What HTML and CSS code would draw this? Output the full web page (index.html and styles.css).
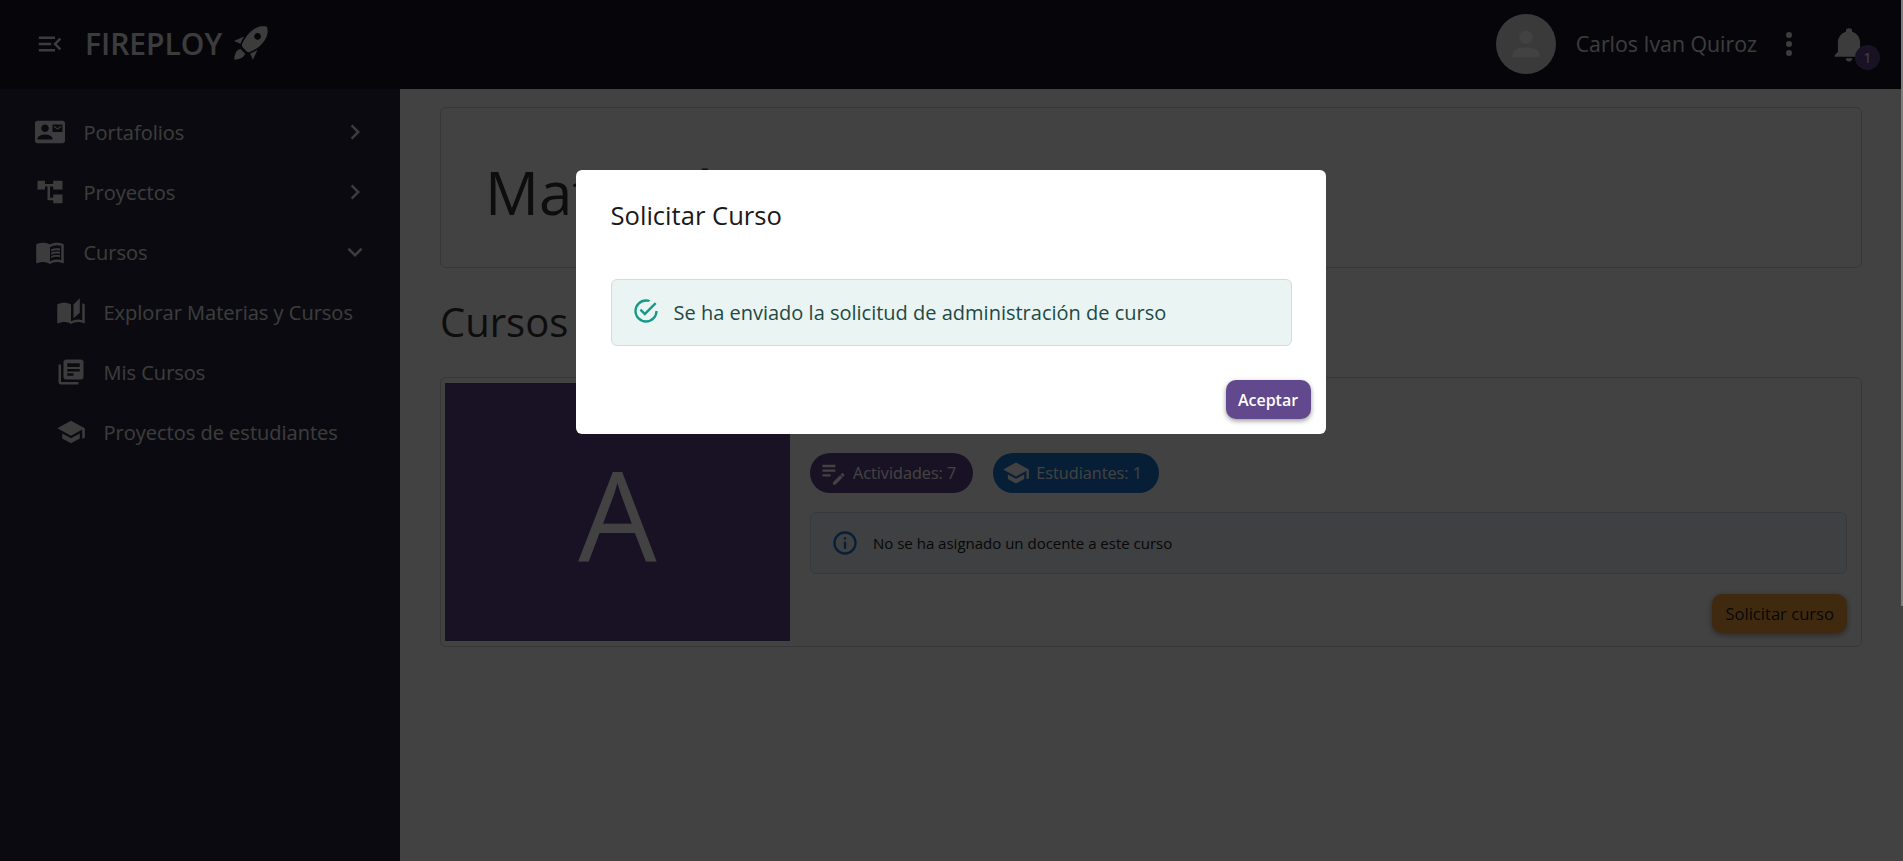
FILE: index.html
```html
<!DOCTYPE html>
<html lang="es">
<head>
  <meta charset="UTF-8" />
  <title>Fireploy</title>
  <link rel="stylesheet" href="styles.css">
</head>
<body>

  <header class="topbar">
    <div class="brand">
      <svg class="menu-toggle" viewBox="0 0 24 24"><path d="M21,15.61L19.59,17L14.58,12L19.59,7L21,8.39L17.44,12L21,15.61M3,6H16V8H3V6M3,13V11H13V13H3M3,18V16H16V18H3Z"/></svg>
      <span class="brand-name">FIREPLOY</span>
      <svg class="brand-rocket" viewBox="0 0 24 24"><path d="M13.13 22.19L11.5 18.36C13.07 17.78 14.54 17 15.9 16.09L13.13 22.19M5.64 12.5L1.81 10.87L7.91 8.1C7 9.46 6.22 10.93 5.64 12.5M21.61 2.39C21.61 2.39 16.66 .269 11 5.93C8.81 8.12 7.5 10.53 6.65 12.64C6.37 13.39 6.56 14.21 7.11 14.77L9.24 16.89C9.79 17.45 10.61 17.63 11.36 17.35C13.5 16.53 15.88 15.19 18.07 13C23.73 7.34 21.61 2.39 21.61 2.39M14.54 9.46C13.76 8.68 13.76 7.41 14.54 6.63S16.59 5.85 17.37 6.63C18.14 7.41 18.15 8.68 17.37 9.46C16.59 10.24 15.32 10.24 14.54 9.46M2 22C2 19 3 16.5 5.5 15.5L8.5 18.5C7.5 21 5 22 2 22Z" fill-rule="evenodd"/></svg>
    </div>
    <div class="user-area">
      <div class="avatar">
        <svg viewBox="0 0 24 24"><path d="M12,4A4,4 0 0,1 16,8A4,4 0 0,1 12,12A4,4 0 0,1 8,8A4,4 0 0,1 12,4M12,14C16.42,14 20,15.79 20,18V20H4V18C4,15.79 7.58,14 12,14Z"/></svg>
      </div>
      <span class="user-name">Carlos Ivan Quiroz</span>
      <svg class="user-dots" viewBox="0 0 24 24"><path d="M12,16A2,2 0 0,1 14,18A2,2 0 0,1 12,20A2,2 0 0,1 10,18A2,2 0 0,1 12,16M12,10A2,2 0 0,1 14,12A2,2 0 0,1 12,14A2,2 0 0,1 10,12A2,2 0 0,1 12,10M12,4A2,2 0 0,1 14,6A2,2 0 0,1 12,8A2,2 0 0,1 10,6A2,2 0 0,1 12,4Z"/></svg>
      <div class="bell">
        <svg viewBox="0 0 24 24"><path d="M21,19V20H3V19L5,17V11C5,7.9 7.03,5.17 10,4.29C10,4.19 10,4.1 10,4A2,2 0 0,1 12,2A2,2 0 0,1 14,4C14,4.1 14,4.19 14,4.29C16.97,5.17 19,7.9 19,11V17L21,19M14,21A2,2 0 0,1 12,23A2,2 0 0,1 10,21"/></svg>
        <span class="bell-badge">1</span>
      </div>
    </div>
  </header>

  <div class="layout">
    <nav class="sidebar">
      <div class="nav-item">
        <svg class="nav-icon" viewBox="0 0 24 24"><path d="M21 8V7L18 9L15 7V8L18 10M22 3H2C.9 3 0 3.9 0 5V19C0 20.1 .9 21 2 21H22C23.1 21 24 20.1 24 19V5C24 3.9 23.1 3 22 3M8 6C9.66 6 11 7.34 11 9S9.66 12 8 12 5 10.66 5 9 6.34 6 8 6M14 18H2V17C2 15 6 13.9 8 13.9S14 15 14 17M22 12H14V6H22Z"/></svg>
        <span class="nav-label">Portafolios</span>
        <svg class="nav-arrow" viewBox="0 0 24 24"><path d="M8.59,16.58L13.17,12L8.59,7.41L10,6L16,12L10,18L8.59,16.58Z"/></svg>
      </div>
      <div class="nav-item">
        <svg class="nav-icon" viewBox="0 0 24 24"><path d="M2 3H8V10H2V3M14.6 3H22V10H14.6V3M14.6 14H22V21H14.6V14M8 5.5H14.6V7.5H12V16.5H14.6V18.5H10V7.5H8V5.5Z"/></svg>
        <span class="nav-label">Proyectos</span>
        <svg class="nav-arrow" viewBox="0 0 24 24"><path d="M8.59,16.58L13.17,12L8.59,7.41L10,6L16,12L10,18L8.59,16.58Z"/></svg>
      </div>
      <div class="nav-item">
        <svg class="nav-icon" viewBox="0 0 24 24"><path d="M12,21.5C10.65,20.65 8.2,20 6.5,20C4.85,20 3.15,20.3 1.75,21.05C1.65,21.1 1.6,21.1 1.5,21.1C1.25,21.1 1,20.85 1,20.6V6C1.6,5.55 2.25,5.25 3,5C4.11,4.65 5.33,4.5 6.5,4.5C8.45,4.5 10.55,4.9 12,6C13.45,4.9 15.55,4.5 17.5,4.5C18.67,4.5 19.89,4.65 21,5C21.75,5.25 22.4,5.55 23,6V20.6C23,20.85 22.75,21.1 22.5,21.1C22.4,21.1 22.35,21.1 22.25,21.05C20.85,20.3 19.15,20 17.5,20C15.8,20 13.35,20.65 12,21.5M12,8V19.5C13.35,18.65 15.8,18 17.5,18C18.7,18 19.9,18.15 21,18.5V7C19.9,6.65 18.7,6.5 17.5,6.5C15.8,6.5 13.35,7.15 12,8M13,11.5C14.11,10.82 15.6,10.5 17.5,10.5C18.41,10.5 19.26,10.59 20,10.78V9.23C19.13,9.08 18.29,9 17.5,9C15.73,9 14.23,9.28 13,9.84V11.5M17.5,11.67C15.79,11.67 14.29,11.93 13,12.46V14.15C14.11,13.5 15.6,13.16 17.5,13.16C18.54,13.16 19.38,13.24 20,13.4V11.9C19.13,11.74 18.29,11.67 17.5,11.67M20,14.57C19.13,14.41 18.29,14.33 17.5,14.33C15.67,14.33 14.17,14.6 13,15.13V16.82C14.11,16.16 15.6,15.83 17.5,15.83C18.54,15.83 19.38,15.91 20,16.07V14.57Z"/></svg>
        <span class="nav-label">Cursos</span>
        <svg class="nav-arrow" viewBox="0 0 24 24"><path d="M7.41,8.58L12,13.17L16.59,8.58L18,10L12,16L6,10L7.41,8.58Z"/></svg>
      </div>
      <div class="nav-item sub">
        <svg class="nav-icon" viewBox="0 0 24 24"><path d="M19 1L14 6V17L19 12.5V1M21 5V18.5C19.9 18.15 18.7 18 17.5 18C15.8 18 13.35 18.65 12 19.5V6C10.55 4.9 8.45 4.5 6.5 4.5C4.55 4.5 2.45 4.9 1 6V20.65C1 20.9 1.25 21.15 1.5 21.15C1.6 21.15 1.65 21.1 1.75 21.1C3.1 20.45 5.05 20 6.5 20C8.45 20 10.55 20.4 12 21.5C13.35 20.65 15.8 20 17.5 20C19.15 20 20.85 20.3 22.25 21.05C22.35 21.1 22.4 21.1 22.5 21.1C22.75 21.1 23 20.85 23 20.6V6C22.4 5.55 21.75 5.25 21 5Z"/></svg>
        <span class="nav-label">Explorar Materias y Cursos</span>
      </div>
      <div class="nav-item sub">
        <svg class="nav-icon" viewBox="0 0 24 24"><path d="M4 6H2V20C2 21.1 2.9 22 4 22H18V20H4V6M20 2H8C6.9 2 6 2.9 6 4V16C6 17.1 6.9 18 8 18H20C21.1 18 22 17.1 22 16V4C22 2.9 21.1 2 20 2M14 15H9V13H14V15M19 11.5H9V9.5H19V11.5M19 8H9V5H19V8Z"/></svg>
        <span class="nav-label">Mis Cursos</span>
      </div>
      <div class="nav-item sub">
        <svg class="nav-icon" viewBox="0 0 24 24"><path d="M12,3L1,9L12,15L21,10.09V17H23V9M5,13.18V17.18L12,21L19,17.18V13.18L12,17L5,13.18Z"/></svg>
        <span class="nav-label">Proyectos de estudiantes</span>
      </div>
    </nav>

    <main class="content">
      <section class="title-card">
        <h1>Matemáticas</h1>
      </section>

      <h2>Cursos</h2>

      <article class="course-card">
        <div class="course-thumb">A</div>
        <div class="course-body">
          <div class="chips">
            <span class="chip purple">
              <svg viewBox="0 0 24 24"><path d="M3 5V7H14V5H3M3 9V11H14V9H3M20 12.1C19.9 12.1 19.7 12.2 19.6 12.3L18.6 13.3L20.7 15.4L21.7 14.4C21.9 14.2 21.9 13.8 21.7 13.6L20.4 12.3C20.3 12.2 20.2 12.1 20 12.1M18.1 13.9L12 19.9V22H14.1L20.2 15.9L18.1 13.8M3 13V15H10V13H3Z"/></svg>
              Actividades: 7
            </span>
            <span class="chip blue">
              <svg viewBox="0 0 24 24"><path d="M12,3L1,9L12,15L21,10.09V17H23V9M5,13.18V17.18L12,21L19,17.18V13.18L12,17L5,13.18Z"/></svg>
              Estudiantes: 1
            </span>
          </div>
          <div class="info-alert">
            <svg viewBox="0 0 24 24"><path d="M11,9H13V7H11M12,20C7.59,20 4,16.41 4,12C4,7.59 7.59,4 12,4C16.41,4 20,7.59 20,12C20,16.41 16.41,20 12,20M12,2A10,10 0 0,0 2,12A10,10 0 0,0 12,22A10,10 0 0,0 22,12A10,10 0 0,0 12,2M11,17H13V11H11V17Z"/></svg>
            No se ha asignado un docente a este curso
          </div>
          <div class="course-actions">
            <button class="btn-request">Solicitar curso</button>
          </div>
        </div>
      </article>
    </main>
  </div>

  <div class="backdrop">
    <div class="scroll-thumb"></div>
    <div class="modal">
      <h3>Solicitar Curso</h3>
      <div class="success-alert">
        <svg viewBox="0 0 24 24"><path d="M12,20A8,8 0 0,1 4,12A8,8 0 0,1 12,4C12.76,4 13.5,4.11 14.2,4.31L15.77,2.74C14.61,2.26 13.34,2 12,2A10,10 0 0,0 2,12A10,10 0 0,0 12,22A10,10 0 0,0 22,12H20A8,8 0 0,1 12,20M7.91,10.08L6.5,11.5L11,16L21,6L19.59,4.58L11,13.17L7.91,10.08Z"/></svg>
        Se ha enviado la solicitud de administración de curso
      </div>
      <div class="modal-actions">
        <button class="btn-accept">Aceptar</button>
      </div>
    </div>
  </div>

</body>
</html>
```

FILE: styles.css
```css
* {
  box-sizing: border-box;
}
body {
  margin: 0;
  height: 100vh;
  overflow: hidden;
  display: flex;
  flex-direction: column;
  font-family: "Open Sans", "Noto Sans", sans-serif;
  background: #fff;
  color: #333;
}
svg {
  fill: currentColor;
  flex-shrink: 0;
  display: block;
}

/* barra superior */
.topbar {
  height: 89px;
  flex-shrink: 0;
  display: flex;
  align-items: center;
  justify-content: space-between;
  padding: 0 35px 2px 35px;
  background: #14142a;
  color: #e8e8e8;
}
.brand {
  display: flex;
  align-items: center;
}
.menu-toggle {
  width: 30px;
  height: 30px;
}
.brand-name {
  margin-left: 20px;
  font-size: 30px;
  font-weight: 600;
}
.brand-rocket {
  width: 40px;
  height: 40px;
  margin-left: 9px;
  margin-top: -1px;
}
.user-area {
  display: flex;
  align-items: center;
}
.avatar {
  width: 60px;
  height: 60px;
  border-radius: 50%;
  background: #e0e0e0;
  color: #fff;
  display: flex;
  align-items: center;
  justify-content: center;
}
.avatar svg {
  width: 40px;
  height: 40px;
}
.user-name {
  margin-left: 20px;
  font-size: 21.3px;
}
.user-dots {
  width: 36px;
  height: 36px;
  margin-left: 14px;
}
.bell {
  position: relative;
  margin-left: 23px;
}
.bell svg {
  width: 38px;
  height: 38px;
}
.bell-badge {
  position: absolute;
  left: 25px;
  top: 20px;
  width: 25px;
  height: 25px;
  border-radius: 50%;
  background: #62488c;
  color: #fff;
  font-size: 14px;
  line-height: 25px;
  text-align: center;
}

/* menu lateral */
.layout {
  flex: 1;
  display: flex;
  min-height: 0;
}
.sidebar {
  width: 400px;
  flex-shrink: 0;
  padding-top: 13px;
  background: #2a2a3e;
  color: #e8e8e8;
}
.nav-item {
  height: 60px;
  display: flex;
  align-items: center;
  padding: 0 30px 0 35px;
}
.nav-item.sub {
  padding-left: 56px;
}
.nav-icon {
  width: 30px;
  height: 30px;
}
.nav-label {
  flex: 1;
  margin-left: 18.5px;
  font-size: 20px;
}
.nav-item.sub .nav-label {
  margin-left: 17.5px;
}
.nav-arrow {
  width: 30px;
  height: 30px;
}

/* contenido */
.content {
  flex: 1;
  padding: 18px 41px 0 40px;
}
.title-card {
  height: 161px;
  padding: 43px 44px 0;
  border: 1px solid #d4d4d4;
  border-radius: 6px;
}
.title-card h1 {
  margin: 0;
  font-size: 60px;
  font-weight: 400;
  line-height: 82px;
}
h2 {
  margin: 27px 0 28px;
  font-size: 40px;
  font-weight: 400;
  line-height: 54px;
}
.course-card {
  height: 270px;
  display: flex;
  padding: 5px 14px 5px 4px;
  border: 1px solid #d4d4d4;
  border-radius: 6px;
}
.course-thumb {
  width: 345px;
  display: flex;
  align-items: center;
  justify-content: center;
  background: #62488c;
  color: #fff;
  font-size: 124px;
}
.course-body {
  flex: 1;
  padding: 70px 0 0 20px;
}
.chips {
  display: flex;
  gap: 20px;
}
.chip {
  height: 40px;
  display: flex;
  align-items: center;
  gap: 6px;
  padding: 0 17px 0 9px;
  border-radius: 20px;
  color: #fff;
  font-size: 16.2px;
}
.chip svg {
  width: 28px;
  height: 28px;
}
.chip.purple {
  background: #62488c;
}
.chip.blue {
  background: #1976d2;
}
.info-alert {
  height: 62px;
  margin-top: 19px;
  display: flex;
  align-items: center;
  gap: 14px;
  padding: 0 20px;
  border: 1px solid #d2dbe2;
  border-radius: 6px;
  background: #eff6fb;
  color: #222;
  font-size: 15px;
}
.info-alert svg {
  width: 28px;
  height: 28px;
  color: #1976d2;
}
.course-actions {
  display: flex;
  justify-content: flex-end;
  margin-top: 20px;
}
.btn-request {
  height: 39px;
  padding: 0 13px;
  border: none;
  border-radius: 10px;
  background: #f5a13d;
  color: #222;
  font-family: inherit;
  font-size: 16.6px;
  box-shadow: 0 2px 6px rgba(0, 0, 0, 0.4);
}

/* dialogo */
.backdrop {
  position: fixed;
  inset: 0;
  display: flex;
  justify-content: center;
  align-items: flex-start;
  padding: 170px 2px 0 0;
  background: rgba(0, 0, 0, 0.74);
}
.scroll-thumb {
  position: absolute;
  top: 0;
  right: 0;
  width: 2px;
  height: 606px;
  background: #808080;
}
.modal {
  width: 750px;
  height: 264px;
  padding: 0 15px 15px 35px;
  border-radius: 6px;
  background: #fff;
  color: #1a1a1a;
}
.modal h3 {
  margin: 0;
  padding-top: 30px;
  font-size: 25.6px;
  font-weight: 400;
  line-height: 32px;
}
.success-alert {
  width: 681px;
  height: 67px;
  margin-top: 47px;
  display: flex;
  align-items: center;
  gap: 14px;
  padding: 0 20px;
  border: 1px solid #d4dcdb;
  border-radius: 6px;
  background: #eaf4f2;
  color: #1d4a44;
  font-size: 20px;
}
.success-alert svg {
  width: 28px;
  height: 28px;
  margin-top: -3px;
  color: #159a8a;
}
.modal-actions {
  display: flex;
  justify-content: flex-end;
  margin-top: 34px;
}
.btn-accept {
  width: 85px;
  height: 39px;
  border: none;
  border-radius: 10px;
  background: #62488c;
  color: #fff;
  font-family: inherit;
  font-size: 16px;
  font-weight: 600;
  box-shadow: 0 2px 5px rgba(0, 0, 0, 0.4);
}
```
